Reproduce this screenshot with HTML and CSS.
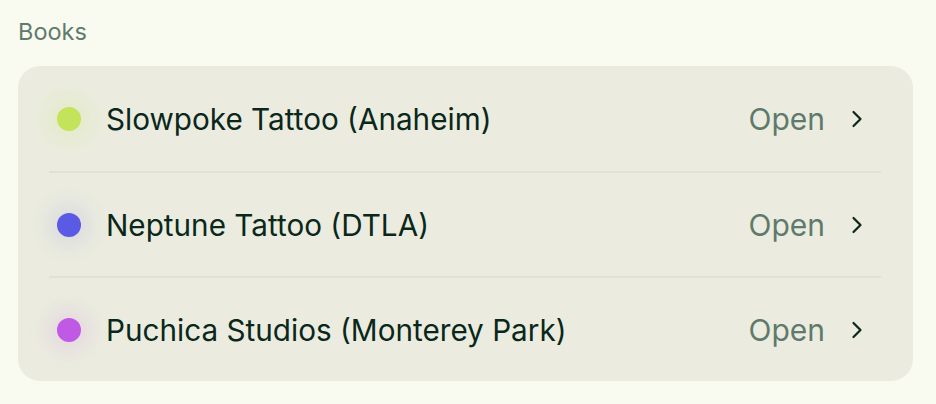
FILE: index.html
```html
<!DOCTYPE html>
<html>
<head>
<meta charset="utf-8">
<link rel="stylesheet" href="styles.css">
</head>
<body>
<div class="page">
  <div class="label">Books</div>
  <div class="card">
    <div class="row">
      <span class="dot dot-lime"></span>
      <span class="name">Slowpoke Tattoo (Anaheim)</span>
      <span class="status">Open</span>
      <svg class="chev" viewBox="0 0 12 20" width="12" height="20"><path d="M2.5 3 L9.5 10 L2.5 17" fill="none" stroke="#0a271b" stroke-width="2.2" stroke-linecap="round" stroke-linejoin="round"/></svg>
    </div>
    <div class="row">
      <span class="dot dot-blue"></span>
      <span class="name">Neptune Tattoo (DTLA)</span>
      <span class="status">Open</span>
      <svg class="chev" viewBox="0 0 12 20" width="12" height="20"><path d="M2.5 3 L9.5 10 L2.5 17" fill="none" stroke="#0a271b" stroke-width="2.2" stroke-linecap="round" stroke-linejoin="round"/></svg>
    </div>
    <div class="row">
      <span class="dot dot-purple"></span>
      <span class="name">Puchica Studios (Monterey Park)</span>
      <span class="status">Open</span>
      <svg class="chev" viewBox="0 0 12 20" width="12" height="20"><path d="M2.5 3 L9.5 10 L2.5 17" fill="none" stroke="#0a271b" stroke-width="2.2" stroke-linecap="round" stroke-linejoin="round"/></svg>
    </div>
  </div>
</div>
</body>
</html>
```
FILE: styles.css
```css
html, body {
  margin: 0;
  padding: 0;
  background: #f9fbf0;
}
body {
  font-family: Inter, "Liberation Sans", sans-serif;
}
.page {
  padding: 17px 23px 0 18px;
}
.label {
  font-size: 23.5px;
  line-height: 30px;
  color: #5f7a6c;
  margin-bottom: 19px;
}
.card {
  background: #ebecdf;
  border-radius: 22px;
  padding: 0 32px 0 31px;
}
.row {
  height: 105px;
  box-sizing: border-box;
  display: flex;
  align-items: center;
}
.row + .row {
  border-top: 2px solid #e0e2d5;
}
.dot {
  width: 24px;
  height: 24px;
  border-radius: 50%;
  margin-left: 8px;
  margin-right: 25px;
  flex: none;
}
.dot-lime { background: #c3e45a; box-shadow: 0 0 20px 10px rgba(195, 228, 90, 0.16); }
.dot-blue { background: #5a5ae4; box-shadow: 0 0 20px 10px rgba(90, 90, 228, 0.1); }
.dot-purple { background: #c05ae4; box-shadow: 0 0 20px 10px rgba(192, 90, 228, 0.13); }
.name {
  flex: 1;
  font-size: 29.7px;
  color: #0a271b;
}
.status {
  font-size: 30px;
  color: #5f7a6c;
  margin-right: 26px;
}
.chev {
  flex: none;
  margin-right: 18px;
}
```
